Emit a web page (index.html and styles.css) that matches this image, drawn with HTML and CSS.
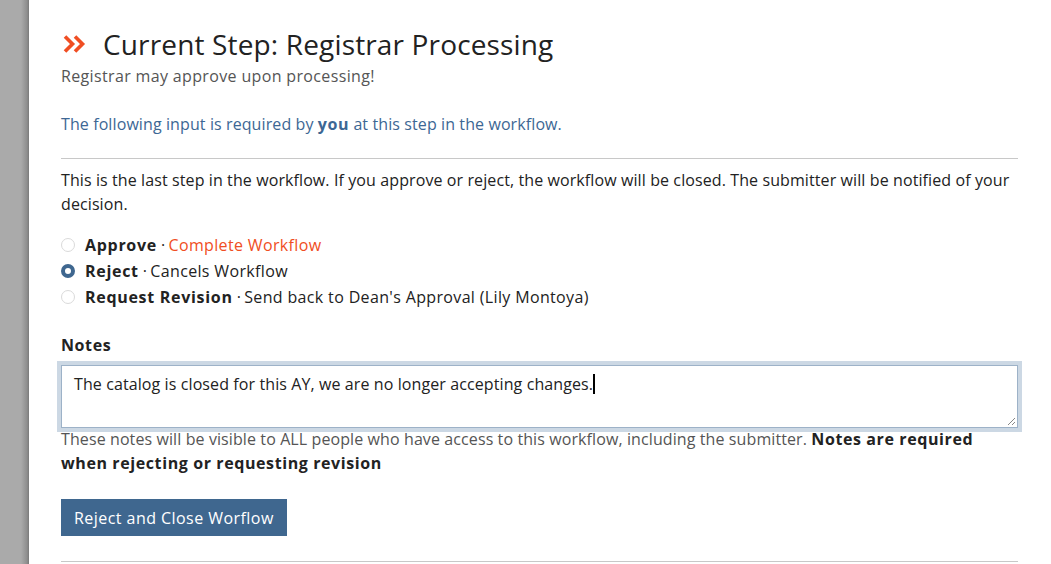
FILE: index.html
```html
<!DOCTYPE html>
<html>
<head>
<meta charset="utf-8">
<link rel="stylesheet" href="styles.css">
</head>
<body>
<div class="page">
  <div class="sidebar"></div>
  <main class="main">
    <h1 class="title">
      <svg class="chev" width="24" height="18" viewBox="0 0 24 18"><path d="M2 1.5 L9.5 9 L2 16.5 M12 1.5 L19.5 9 L12 16.5" fill="none" stroke="#f04e23" stroke-width="3.6" stroke-linecap="butt" stroke-linejoin="miter"/></svg>
      <span>Current Step: Registrar Processing</span>
    </h1>
    <p class="subtitle">Registrar may approve upon processing!</p>
    <p class="required">The following input is required by <b>you</b> at this step in the workflow.</p>
    <hr class="rule">
    <p class="info">This is the last step in the workflow. If you approve or reject, the workflow will be closed. The submitter will be notified of your decision.</p>
    <div class="options">
      <label class="opt"><span class="radio"></span><b>Approve</b><span class="dot">·</span><span class="accent">Complete Workflow</span></label>
      <label class="opt"><span class="radio checked"></span><b>Reject</b><span class="dot">·</span><span>Cancels Workflow</span></label>
      <label class="opt"><span class="radio"></span><b>Request Revision</b><span class="dot">·</span><span>Send back to Dean's Approval (Lily Montoya)</span></label>
    </div>
    <div class="notes-label">Notes</div>
    <div class="ta">The catalog is closed for this AY, we are no longer accepting changes.<span class="caret"></span><span class="grip"></span></div>
    <p class="help">These notes will be visible to ALL people who have access to this workflow, including the submitter. <b>Notes are required when rejecting or requesting revision</b></p>
    <button class="btn">Reject and Close Worflow</button>
    <hr class="rule bottom">
  </main>
</div>
</body>
</html>
```
FILE: styles.css
```css
html, body { margin: 0; padding: 0; background: #fff; }
body { font-family: "Open Sans", "DejaVu Sans", sans-serif; color: #222; font-size: 16px; letter-spacing: 0.1px; }
.page { display: flex; min-height: 564px; overflow: hidden; height: 564px; }
.sidebar { width: 29px; flex: none; background: linear-gradient(to right, #aaaaaa 0, #aaaaaa 21px, #8e8e8e 27px, #7a7a7a 29px); }
.main { flex: 1; padding: 0 33px 0 32px; }
.title { margin: 26px 0 0; font-weight: 400; font-size: 28px; line-height: 36px; display: flex; align-items: center; color: #222; letter-spacing: 0.15px; }
.chev { margin: 0 16px 0 2px; flex: none; }
.subtitle { margin: 2px 0 0; color: #555; line-height: 24px; font-size: 16px; letter-spacing: 0.35px; }
.required { margin: 24px 0 0; color: #3d6794; line-height: 24px; }
.required b { font-weight: 700; letter-spacing: 0.6px; }
.rule { border: 0; border-top: 1px solid #c8c8c8; margin: 22px 0 0; height: 0; }
.info { margin: 9px 0 0; line-height: 24px; color: #222; }
.options { margin-top: 16px; display: flex; flex-direction: column; }
.opt { display: flex; align-items: center; line-height: 26px; height: 26px; letter-spacing: 0.35px; }
.opt b { font-weight: 700; letter-spacing: 0.7px; }
.radio { width: 14px; height: 14px; border: 1px solid #dadada; border-radius: 50%; box-sizing: border-box; margin-right: 10px; flex: none; }
.radio.checked { border: 4px solid #3f678f; }
.dot { margin: 0 3px 0 4px; }
.accent { color: #f04e23; }
.notes-label { margin-top: 23px; font-weight: 700; line-height: 24px; letter-spacing: 0.6px; }
.ta { position: relative; margin-top: 8px; border: 1px solid #9db2c8; box-shadow: 0 0 0 4px #ccd8e4; height: 49px; padding: 6px 12px; line-height: 24px; box-sizing: content-box; }
.caret { display: inline-block; width: 1.5px; height: 20px; background: #000; vertical-align: -4px; }
.grip { position: absolute; right: 2px; bottom: 2px; width: 7px; height: 7px; background: linear-gradient(135deg, transparent 45%, #888 45%, #888 52%, transparent 52%, transparent 72%, #888 72%, #888 80%, transparent 80%); }
.help { margin: -1px 0 0; color: #555; line-height: 24px; }
.help b { color: #222; letter-spacing: 0.6px; }
.btn { margin-top: 24px; background: #3f678f; color: #fff; border: 0; font: inherit; font-size: 16px; letter-spacing: 0.45px; height: 37px; padding: 0 13px; cursor: pointer; display: block; }
.rule.bottom { margin-top: 25px; }
```
